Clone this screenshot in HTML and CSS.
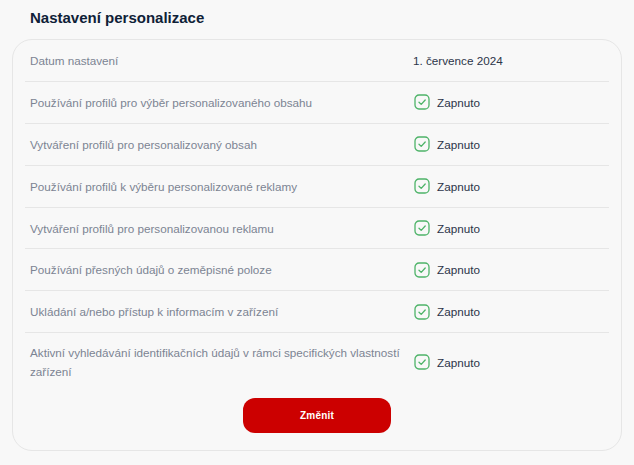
FILE: index.html
```html
<!DOCTYPE html>
<html lang="cs">
<head>
<meta charset="utf-8">
<title>Nastavení personalizace</title>
<link rel="stylesheet" href="styles.css">
</head>
<body>
<h1 class="title">Nastavení personalizace</h1>
<section class="card">
  <div class="row row-first"><div class="label">Datum nastavení</div><div class="value">1. července 2024</div></div>
  <div class="row"><div class="label">Používání profilů pro výběr personalizovaného obsahu</div><div class="value status"><svg class="check" viewBox="0 0 16 16"><rect x="1" y="1" width="14" height="14" rx="4"/><path d="M5 8.2l2.2 2.2L11.2 6"/></svg><span>Zapnuto</span></div></div>
  <div class="row"><div class="label">Vytváření profilů pro personalizovaný obsah</div><div class="value status"><svg class="check" viewBox="0 0 16 16"><rect x="1" y="1" width="14" height="14" rx="4"/><path d="M5 8.2l2.2 2.2L11.2 6"/></svg><span>Zapnuto</span></div></div>
  <div class="row"><div class="label">Používání profilů k výběru personalizované reklamy</div><div class="value status"><svg class="check" viewBox="0 0 16 16"><rect x="1" y="1" width="14" height="14" rx="4"/><path d="M5 8.2l2.2 2.2L11.2 6"/></svg><span>Zapnuto</span></div></div>
  <div class="row"><div class="label">Vytváření profilů pro personalizovanou reklamu</div><div class="value status"><svg class="check" viewBox="0 0 16 16"><rect x="1" y="1" width="14" height="14" rx="4"/><path d="M5 8.2l2.2 2.2L11.2 6"/></svg><span>Zapnuto</span></div></div>
  <div class="row"><div class="label">Používání přesných údajů o zeměpisné poloze</div><div class="value status"><svg class="check" viewBox="0 0 16 16"><rect x="1" y="1" width="14" height="14" rx="4"/><path d="M5 8.2l2.2 2.2L11.2 6"/></svg><span>Zapnuto</span></div></div>
  <div class="row"><div class="label">Ukládání a/nebo přístup k informacím v zařízení</div><div class="value status"><svg class="check" viewBox="0 0 16 16"><rect x="1" y="1" width="14" height="14" rx="4"/><path d="M5 8.2l2.2 2.2L11.2 6"/></svg><span>Zapnuto</span></div></div>
  <div class="row row-last"><div class="label">Aktivní vyhledávání identifikačních údajů v rámci specifických vlastností zařízení</div><div class="value status"><svg class="check" viewBox="0 0 16 16"><rect x="1" y="1" width="14" height="14" rx="4"/><path d="M5 8.2l2.2 2.2L11.2 6"/></svg><span>Zapnuto</span></div></div>
  <div class="actions"><button class="btn" type="button">Změnit</button></div>
</section>
</body>
</html>
```
FILE: styles.css
```css
* { box-sizing: border-box; }
html, body { height: 100%; }
body {
  margin: 0;
  padding: 8px 12px 0;
  background: #f8f8f8;
  font-family: "Liberation Sans", Arial, sans-serif;
  overflow: hidden;
}
.title {
  margin: 0 0 11px 18px;
  font-size: 15px;
  line-height: 20px;
  font-weight: 700;
  color: #0f2137;
}
.card {
  width: 610px;
  height: 412px;
  border: 1px solid #e6e6e6;
  border-radius: 20px;
  padding: 0 12px;
}
.row {
  display: flex;
  align-items: center;
  height: 41.9px;
  border-bottom: 1px solid #e6e6e6;
  font-size: 11.7px;
}
.row-last {
  height: 58.3px;
  border-bottom: 0;
}
.label {
  flex: none;
  width: 383px;
  padding: 0 5px;
  line-height: 19px;
  color: #7c8493;
}
.value {
  padding-left: 5px;
  color: #2c3549;
}
.status {
  display: flex;
  align-items: center;
  gap: 7px;
  padding-left: 6px;
}
.check {
  width: 16px;
  height: 16px;
  fill: none;
  stroke: #4db368;
  stroke-width: 1.3;
  stroke-linecap: round;
  stroke-linejoin: round;
}
.actions {
  display: flex;
  justify-content: center;
  padding-top: 6px;
}
.btn {
  width: 148px;
  height: 35px;
  border: 0;
  border-radius: 12px;
  background: #cc0000;
  color: #fff;
  font: 700 10px "Liberation Sans", Arial, sans-serif;
  letter-spacing: 0.2px;
}
```
